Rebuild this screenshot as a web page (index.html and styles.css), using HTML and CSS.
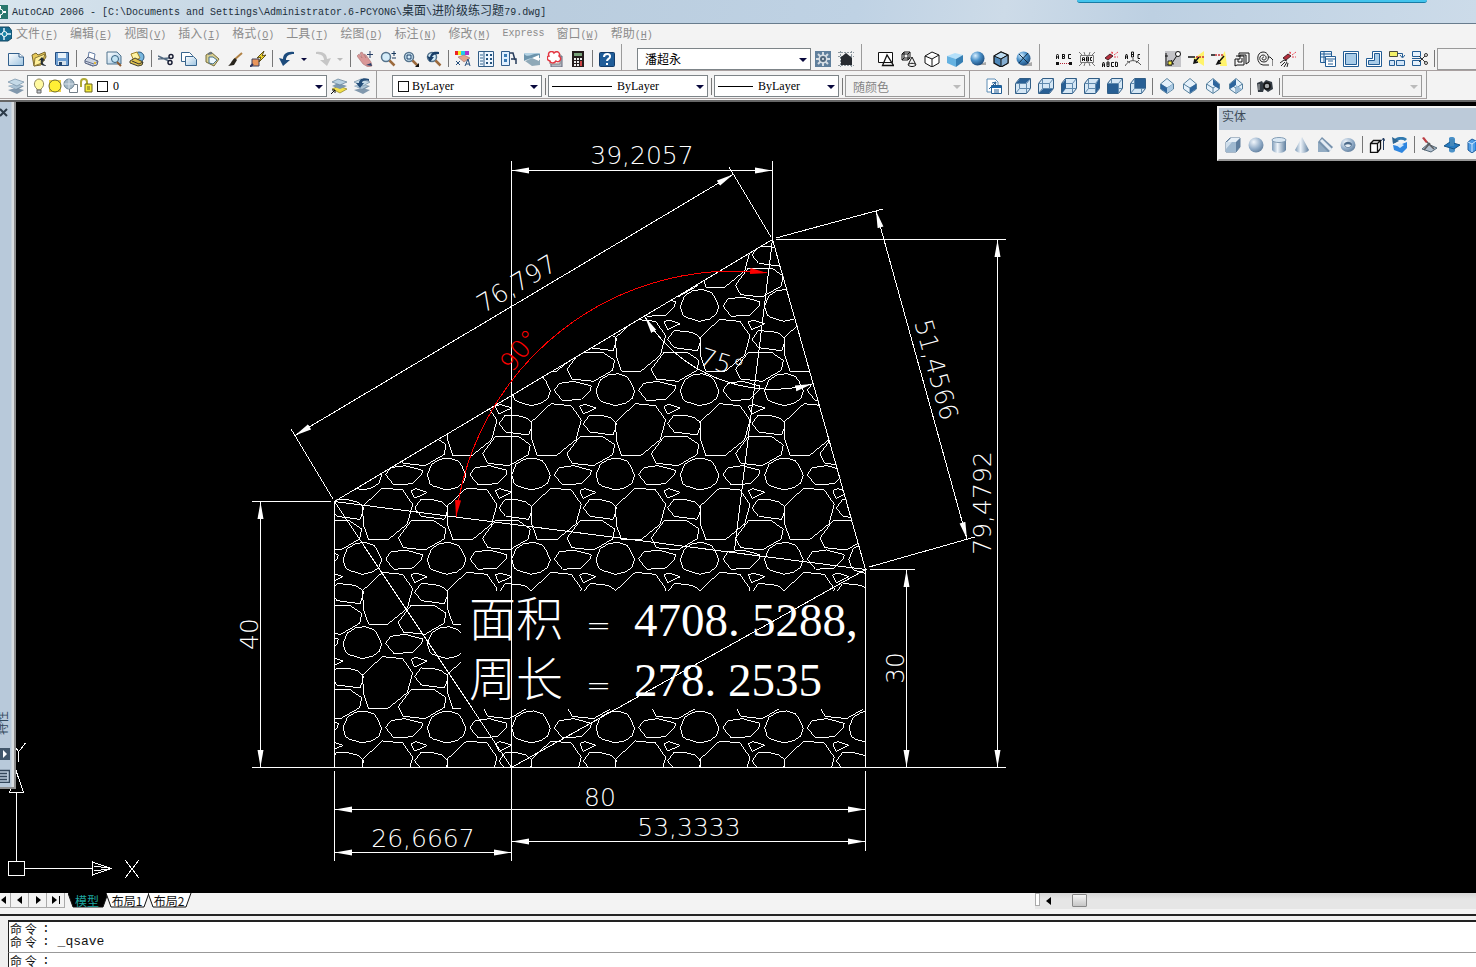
FILE: index.html
```html
<!DOCTYPE html>
<html lang="zh-CN">
<head>
<meta charset="utf-8">
<title>AutoCAD 2006</title>
<link rel="stylesheet" href="styles.css">
</head>
<body>
<svg class="sprite" aria-hidden="true">
  <defs>
    <linearGradient id="sheet" x1="0" y1="0" x2="1" y2="1"><stop offset="0" stop-color="#fff"/><stop offset="1" stop-color="#9cc3e0"/></linearGradient>
    <linearGradient id="steel" x1="0" y1="0" x2="1" y2="0"><stop offset="0" stop-color="#7d9bb8"/><stop offset=".4" stop-color="#eef4fa"/><stop offset="1" stop-color="#5f7f9f"/></linearGradient>
    <radialGradient id="ball" cx=".35" cy=".3" r=".8"><stop offset="0" stop-color="#d8efff"/><stop offset=".45" stop-color="#4a90c8"/><stop offset="1" stop-color="#153f6e"/></radialGradient>
    <radialGradient id="pearl" cx=".35" cy=".3" r=".8"><stop offset="0" stop-color="#f2f7fc"/><stop offset=".6" stop-color="#8faac6"/><stop offset="1" stop-color="#5b7896"/></radialGradient>
    <symbol id="new" viewBox="0 0 16 16"><path d="M.5 2.500H11L15.500 6V14.500H.5z" fill="url(#sheet)" stroke="#315f8c"/><path d="M11 2.500V6h4.500" fill="#fff" stroke="#315f8c"/></symbol>
    <symbol id="open" viewBox="0 0 16 16"><path d="M1 4L5 2l2 2 7-3 1 5-5 8-7 1z" fill="#e7c957" stroke="#77652c"/><path d="M4 7l10-4-3 9-8 3z" fill="#fff09a" stroke="#8b7836"/><path d="M15 15c-5 0-6-3-5-6l-3 1 4-4 3 4-2-.5c-1 2 0 4 3 5z" fill="#222c35"/></symbol>
    <symbol id="save" viewBox="0 0 16 16"><path d="M1.500 1.500h13v13h-12l-1-1z" fill="#6e9fd2" stroke="#234d80"/><path d="M4 2h8v5H4z" fill="#e9f3fa"/><path d="M4 10h8v4H4z" fill="#d7e2eb"/><path d="M5 11h3v3H5z" fill="#244469"/></symbol>
    <symbol id="print" viewBox="0 0 16 16"><path d="M5 7l1-6 6 2-1 6" fill="#fff" stroke="#667ea5"/><path d="M2 9l3-3 10 4-1 4-4 1-8-3z" fill="#ccd4e2" stroke="#4f5c7c"/><path d="M2 10l9 3 4-3M5 13l5 2" fill="none" stroke="#65708d"/><path d="M11 12h2" stroke="#e5bb3b" stroke-width="2"/></symbol>
    <symbol id="preview" viewBox="0 0 16 16"><path d="M1 1h10l4 4v8H1z" fill="url(#sheet)" stroke="#4e738d"/><circle cx="9" cy="8" r="3.500" fill="#c4e4f3" stroke="#356080"/><path d="M11 11l4 4" stroke="#8e5b30" stroke-width="2"/></symbol>
    <symbol id="publish" viewBox="0 0 16 16"><circle cx="10" cy="6" r="5" fill="#79b7df" stroke="#285880"/><path d="M2 3l6-2 3 6-6 3z" fill="#fff4a2" stroke="#a18127"/><path d="M1 10l5-3 8 4-1 3-4 1-8-3z" fill="#e0c24e" stroke="#42402e"/><path d="M3 10l7 3 4-2" fill="none" stroke="#333"/></symbol>
    <symbol id="cut" viewBox="0 0 16 16"><path d="M0 5l11 5M0 8l11-1" stroke="#526a81" stroke-width="1.500"/><circle cx="13" cy="5.500" r="2" fill="none" stroke="#1a1f35" stroke-width="1.500"/><circle cx="12" cy="11.500" r="2" fill="none" stroke="#1a1f35" stroke-width="1.500"/></symbol>
    <symbol id="copy" viewBox="0 0 16 16"><path d="M.5 1.500h8l3 3v6H.5z" fill="#fff" stroke="#38658d"/><path d="M4.500 5.500h8l3 3v6h-11z" fill="url(#sheet)" stroke="#38658d"/></symbol>
    <symbol id="paste" viewBox="0 0 16 16"><path d="M2 4l5-3 8 7-5 7-8-4z" fill="#d8cf91" stroke="#766c39"/><path d="M5 6h4l4 3-4 4-4-1z" fill="#edf8ff" stroke="#48718a"/><path d="M4 3l4-1" stroke="#69737f" stroke-width="2"/></symbol>
    <symbol id="brush" viewBox="0 0 16 16"><path d="M15 2L7 9" stroke="#b18245" stroke-width="2"/><path d="M8 7l2 2-3 5-6 1c3-2 3-5 7-8z" fill="#27241c"/></symbol>
    <symbol id="blockedit" viewBox="0 0 16 16"><path d="M2 8h7v7H2z" fill="#e9955a" stroke="#3f405c"/><path d="M0 16l3-3" stroke="#2d3460" stroke-width="2"/><path d="M14 0L7 7l4-1-2 5 7-7-4 1z" fill="#ffe52b" stroke="#5c4c18"/></symbol>
    <symbol id="undo" viewBox="0 0 16 16"><path d="M15 1C8 0 4 3 4 8L0 7l4 8 7-6H7C7 5 10 3 15 3z" fill="#1c4b7c"/></symbol>
    <symbol id="redo" viewBox="0 0 16 16"><path d="M1 1c7-1 11 2 11 7l4-1-4 8-7-6h4C9 5 6 3 1 3z" fill="#c6c6c6"/></symbol>
    <symbol id="pan" viewBox="0 0 16 16"><path d="M0 5l2-2 3 4-2-5 2-1 4 6-2-4 2 1 5 7 1 4-4 1-5-3z" fill="#d99797" stroke="#a06868" stroke-width=".5"/><path d="M9 14l6 1-1-3" fill="#27416b"/><path d="M13 0v7M10 3.500h6" stroke="#263e65"/></symbol>
    <symbol id="lens" viewBox="0 0 16 16"><circle cx="6" cy="6" r="4.500" fill="#d5edfa" stroke="#55738c" stroke-width="1.500"/><path d="M9.500 9.500l5 5" stroke="#9c6b3e" stroke-width="2.500"/></symbol>
    <symbol id="zoomrt" viewBox="0 0 16 16"><use href="#lens"/><path d="M14 0v5M11.500 2.500h5M12 7h4" stroke="#16365b"/></symbol>
    <symbol id="zoomwin" viewBox="0 0 16 16"><use href="#lens"/><path d="M4 4h4v4H4z" fill="none" stroke="#173b65"/><path d="M16 12v4h-4z" fill="#111"/></symbol>
    <symbol id="zoomprev" viewBox="0 0 16 16"><use href="#lens"/><path d="M13 1C7 0 5 2 4 6L1 5l3 6 4-5H6c1-2 3-3 7-3z" fill="#183e68"/></symbol>
    <symbol id="props" viewBox="0 0 16 16"><path d="M0 0h3v4H0z" fill="#e22"/><path d="M3 0h3v4H3z" fill="#ee2"/><path d="M6 0h4v4H6z" fill="#2ce"/><path d="M10 0h4v4h-4z" fill="#a3c"/><path d="M3 6l6-2 6 3-6 4z" fill="#e3a48b" stroke="#8b605e" stroke-width=".5"/><path d="M1 10l4 4M1 14l4-4M10 15l3-7 2 7M11 13h3" stroke="#254e7c" fill="none"/></symbol>
    <symbol id="center" viewBox="0 0 16 16"><path d="M.5.5h15v15H.5zM6 1v14" fill="#edf6ff" stroke="#315c86"/><path d="M2 4h3M2 7h3M2 10h3M2 13h3" stroke="#37678e"/><path d="M8 3h2v2H8zM12 3h2v2h-2zM8 7h2v2H8zM12 7h2v2h-2zM8 11h2v2H8zM12 11h2v2h-2z" fill="#24527c"/></symbol>
    <symbol id="palette" viewBox="0 0 16 16"><path d="M.5.500h8v14h-8z" fill="#dfefff" stroke="#315d8d"/><path d="M3 3h3v3H3zM3 8h3v3H3z" fill="#397bb6"/><path d="M9 2h3l2 7M10 8h5v5" fill="none" stroke="#263b5a" stroke-width="1.500"/></symbol>
    <symbol id="sheetset" viewBox="0 0 16 16"><path d="M0 2h16v4l-6 3H0z" fill="#b5d3e4"/><path d="M0 3c5 5 8-2 16 0v4C10 8 6 6 0 10z" fill="#6c94ac"/><path d="M1 10l8-3 7 2v5l-8 1z" fill="#8fa9b8"/><path d="M8 7l7-3v6z" fill="#fff"/></symbol>
    <symbol id="markup" viewBox="0 0 16 16"><path d="M4 5h11v11H4z" fill="#b4b9c2" stroke="#64687c"/><path d="M3 3h10v10H3z" fill="#eee" stroke="#888"/><path d="M3 10C-1 9 0 5 2 5 0 1 5-1 7 2c3-3 7 0 5 3 4 3 0 7-3 5-2 3-6 2-6 0z" fill="#fff" stroke="#e33742" stroke-width="1.500"/></symbol>
    <symbol id="calc" viewBox="0 0 16 16"><path d="M2 0h12v16H2z" fill="#241c1c"/><path d="M4 2h8v3H4z" fill="#78a078"/><path d="M4 7h2v2H4zM7 7h2v2H7zM10 7h2v2h-2zM4 10h2v2H4zM7 10h2v2H7zM4 13h2v2H4zM7 13h2v2H7z" fill="#eee"/><path d="M10 10h2v5h-2z" fill="#c44"/></symbol>
    <symbol id="help" viewBox="0 0 16 16"><rect x=".5" y="1.500" width="15" height="14" rx="1" fill="#1f5c98" stroke="#123b69"/><path d="M5 6c0-4 7-4 6 0-.5 2-3 2-3 4" fill="none" stroke="#fff" stroke-width="2"/><path d="M7 12h2v2H7z" fill="#fff"/></symbol>
    <symbol id="gear" viewBox="0 0 16 16"><path d="M0 0h16v16H0z" fill="#5f7f9c"/><path d="M8 1v14M1 8h14M3 3l10 10M13 3L3 13" stroke="#d5dde4" stroke-width="2"/><circle cx="8" cy="8" r="4.500" fill="#d5dde4"/><circle cx="8" cy="8" r="3" fill="#51687d"/><circle cx="8" cy="8" r="1" fill="#e9eef2"/></symbol>
    <symbol id="home" viewBox="0 0 16 16"><path d="M0 1.500h16M0 5.500h16M2.500 0v16M13.500 0v16M0 14.500h16" stroke="#8e99a0" stroke-dasharray="2 1"/><path d="M2 7l6-5 6 5v7H3V7z" fill="#272b30"/></symbol>
    <symbol id="wire2d" viewBox="0 0 16 16"><path d="M.5 1.500h14v10H.5z" fill="#fff" stroke="#111"/><path d="M9 4L4.500 14.500h11z" fill="none" stroke="#111" stroke-width="1.300"/></symbol>
    <symbol id="wire3d" viewBox="0 0 16 16"><path d="M1 3h6v6H1zM3 1h6v6H3zM1 3l2-2M7 3l2-2M7 9l2-2M1 9l2-2M11 6L7 14c2 2 6 2 8 0zM8 13c2-1 4-1 6 0" fill="none" stroke="#111"/></symbol>
    <symbol id="hidden" viewBox="0 0 16 16"><path d="M1 5l7-4 7 3v8l-7 4-7-4zM1 5l7 3 7-4M8 8v8" fill="#fff" stroke="#111"/></symbol>
    <symbol id="flat" viewBox="0 0 16 16"><path d="M0 5l8-3 8 2-7 4z" fill="#b4e0fa"/><path d="M0 5l9 3v8l-9-4z" fill="#65b2e1"/><path d="M16 4L9 8v8l7-5z" fill="#367fb4"/></symbol>
    <symbol id="sphere" viewBox="0 0 16 16"><path d="M5 14h11v-3z" fill="#aaa"/><circle cx="7.500" cy="7.500" r="7" fill="url(#ball)"/></symbol>
    <symbol id="flatedge" viewBox="0 0 16 16"><path d="M1 5l7-4 7 3v8l-7 4-7-4z" fill="#4f88b9" stroke="#111" stroke-width="1.300"/><path d="M1 5l7-4 7 3-7 4z" fill="#bddcf1" stroke="#111"/><path d="M8 8l7-4v8l-7 4z" fill="#85add0" stroke="#111"/></symbol>
    <symbol id="gouraud" viewBox="0 0 16 16"><path d="M5 15h11v-4z" fill="#aaa"/><circle cx="7.500" cy="7.500" r="7" fill="url(#ball)"/><path d="M3 3l9 9M3 12l9-10" stroke="#122b40"/></symbol>
    <symbol id="abc" viewBox="0 0 16 16"><g fill="none" stroke="#111"><path d="M.5 8V4.500l1-1.500 1 1.500V8M.5 6h2M6.500 3v5M6.500 3.500h2v2h-2m2 0v2h-2M15 3.500h-2.500v4H15"/></g></symbol>
    <symbol id="text1" viewBox="0 0 16 16"><use href="#abc"/><path d="M0 12.500h16" stroke="#b32435" stroke-dasharray="1 1"/><path d="M0 11h3v3H0zM13 11h3v3h-3z" fill="#111"/></symbol>
    <symbol id="text2" viewBox="0 0 16 16"><path d="M1.500 4.500h13v7h-13zM0 1l3 3M16 1l-3 3M0 15l3-3M16 15l-3-3M5 1l1 3M11 1l-1 3M5 15l1-3M11 15l-1-3" fill="none" stroke="#777"/><path d="M3.500 10V7l1-1 1 1v3M3.500 8.500h2M7.500 6v4h2V6zM7 8h2M13 6.500h-1.500v3H13" fill="none" stroke="#111"/></symbol>
    <symbol id="spray" viewBox="0 0 16 16"><path d="M3 7l5-4 3 2-5 4z" fill="#b52d3a" stroke="#4c2028"/><path d="M10 3l1-3M12 4l4-3M12 6h4M9 1l2 1" stroke="#ea4754" stroke-dasharray="2 1"/></symbol>
    <symbol id="text3" viewBox="0 0 16 16"><use href="#spray"/><path d="M.5 16v-3l1-2 1 2v3M.5 14h2M5 11v4.500h2V11zM5 13h2M12 11.500H9.500v4H12M13.500 11v4.500h2v-4z" fill="none" stroke="#111"/></symbol>
    <symbol id="text4" viewBox="0 0 16 16"><path d="M.5 8V5l1-2 1 2v3M.5 6h2M6.500 1h2v5h-2zM6 3.500h3M15 3.500h-2v4h2" fill="none" stroke="#111"/><path d="M0 15c4-7 11-7 16-1M2 10l3 2M14 9l-3 3M8 7v3" fill="none" stroke="#555"/></symbol>
    <symbol id="edit1" viewBox="0 0 16 16"><path d="M0 0h16v16H0z" fill="#c4c4c8"/><path d="M1 2v11M0 5h3M0 14h7M13 3L7 12M7 9l-2 3 4 1" fill="none" stroke="#111"/><circle cx="13" cy="3" r="2.500" fill="#fff" stroke="#111"/><path d="M3 10h4v4H3z" fill="#f4e941" stroke="#222"/></symbol>
    <symbol id="trim" viewBox="0 0 16 16"><path d="M5 8l11-8v15z" fill="#fff36a"/><path d="M0 6h7M6 12l5-6M7 8l-1 4 4-1" fill="none" stroke="#111" stroke-width="1.500"/><path d="M8 6h8" stroke="#c43135" stroke-width="1.500" stroke-dasharray="2 1"/></symbol>
    <symbol id="extend" viewBox="0 0 16 16"><path d="M9 8l5-8 2 15H9z" fill="#fff36a"/><path d="M0 4h4M7 12l6-7M8 9l-2 4 4-1" fill="none" stroke="#111" stroke-width="1.500"/><path d="M4 4h9" stroke="#c43135" stroke-width="1.500" stroke-dasharray="2 1"/></symbol>
    <symbol id="offset1" viewBox="0 0 16 16"><path d="M2 5h8v9H3l-2 1V8h5V4h6v9M5 6V2h10v9l-3 2M4 8v3h4V7" fill="none" stroke="#111"/></symbol>
    <symbol id="offset2" viewBox="0 0 16 16"><path d="M12 14H6C-1 13-1 1 6 1s7 10 1 10-5-7-1-7 4 5 1 5-2-3 0-3M11 6h2l3 3v6" fill="none" stroke="#222"/></symbol>
    <symbol id="explode" viewBox="0 0 16 16"><use href="#spray"/><path d="M0 12l4-3 3 1M1 15l4-4M4 16l3-5M7 16l1-4" fill="none" stroke="#222"/></symbol>
    <symbol id="vp1" viewBox="0 0 16 16"><path d="M.5.500h11v11H.5zM0 3h12M0 6h12M4 0v12" fill="#ebf4fd" stroke="#225c94"/><path d="M5.500 5.500h10v10h-10zM5 8h10M8 10h5M8 13h5" fill="#fff" stroke="#225c94"/></symbol>
    <symbol id="vp2" viewBox="0 0 16 16"><path d="M.5.500h15v15H.5z" fill="#fff" stroke="#225c94"/><path d="M2.500 2.500h11v11h-11z" fill="#a9cce8" stroke="#225c94"/></symbol>
    <symbol id="vp3" viewBox="0 0 16 16"><path d="M6.500.500h9v15H.5v-8h6z" fill="#fff" stroke="#225c94"/><path d="M8.500 2.500h5v11h-11v-4h6z" fill="#a9cce8" stroke="#225c94"/></symbol>
    <symbol id="vp4" viewBox="0 0 16 16"><path d="M.5.500h8v5h-8z" fill="#f3f169" stroke="#4b4b3c"/><path d="M9 2.500h4.500V6M11 4l2.500 3L16 4" fill="none" stroke="#225c94"/><path d="M.5 9.500h5v5h-5zM7.500 9.500h8v5h-8z" fill="#d1e5f8" stroke="#225c94"/></symbol>
    <symbol id="vp5" viewBox="0 0 16 16"><path d="M.5.500h8v5h-8zM.5 9.500h8v5h-8zM0 7.500h9" fill="#e5f1fc" stroke="#225c94"/><path d="M7 11l6-6M7 5l6 6" stroke="#333"/><circle cx="14" cy="4" r="1.500" fill="none" stroke="#333"/><circle cx="14" cy="12" r="1.500" fill="none" stroke="#333"/></symbol>
    <symbol id="layers" viewBox="0 0 16 16"><path d="M0 12l8-2 8 2-7 4z" fill="#8198ad"/><path d="M0 8l8-2 8 2-7 4z" fill="#7890a6"/><path d="M0 8l8-2 6 2-6 3z" fill="#abc3d5"/><path d="M0 4l7-3 9 3-7 4z" fill="#c5dae8" stroke="#718da4" stroke-width=".7"/></symbol>
    <symbol id="layercur" viewBox="0 0 16 16"><path d="M1 11l7-3 8 3-7 4z" fill="#f1df49" stroke="#8c8020" stroke-width=".7"/><path d="M1 8l6-3 9 3-7 3z" fill="#7c98ae"/><path d="M1 4l6-3 9 3-7 3z" fill="#b8d1e1" stroke="#607d94" stroke-width=".7"/><path d="M0 16l4-4M1 12h3v3" stroke="#111" fill="none"/></symbol>
    <symbol id="layerprev" viewBox="0 0 16 16"><use href="#layers"/><path d="M15 1C8-1 5 2 5 5L2 5l4 5 4-5H8c0-2 2-3 7-2z" fill="#244d78"/></symbol>
    <symbol id="bulb" viewBox="0 0 16 16"><path d="M6 11C1 7 4 1 8 1s7 6 2 10v1H6z" fill="#fff9a0" stroke="#8d865a"/><path d="M6 12h4v3H6z" fill="#c4cad0" stroke="#666"/></symbol>
    <symbol id="sun" viewBox="0 0 16 16"><path d="M2 2h12v12H2z" fill="#f0d44d"/><circle cx="8" cy="8" r="6" fill="#ffef35" stroke="#6d6930"/></symbol>
    <symbol id="freeze" viewBox="0 0 16 16"><path d="M6.500 6.500h8v8h-8z" fill="#fff" stroke="#747f89"/><circle cx="6" cy="6" r="5" fill="#a5b8c6" stroke="#6a8394"/><path d="M6 1v10M1 6h10" stroke="#d6e0e8"/></symbol>
    <symbol id="lock" viewBox="0 0 16 16"><path d="M2 9V4c0-4 6-4 6 0v4" fill="none" stroke="#b0a935" stroke-width="2"/><path d="M6 6h7v8H6z" fill="#f5ec39" stroke="#6b6520"/><path d="M8 9h3M8 11h3" stroke="#6b6520"/></symbol>
    <symbol id="views" viewBox="0 0 16 16"><path d="M1 1h8l3 3v10H1z" fill="#fff" stroke="#5d8db6"/><path d="M5.500 7.500h10v8h-10z" fill="#fff" stroke="#245e93"/><path d="M5 8h10v2H5z" fill="#1966a8"/><path d="M8 12h5M8 14h5M3 11l7-7M6 5l4-1-1 4" fill="none" stroke="#245e93"/></symbol>
    <symbol id="cubebox" viewBox="0 0 16 16"><path d="M.5 5.500l4-5h11v10l-4 5H.5z" fill="#d5e7f5" stroke="#315d85"/><path d="M.5 5.500h11v10M11.500 5.500l4-5M4.500 1v9.500h11M4.500 10.500l-4 5" fill="none" stroke="#5f89ad"/></symbol>
    <symbol id="c1" viewBox="0 0 16 16"><use href="#cubebox"/><path d="M1 5l4-4h10l-4 4z" fill="#285f94"/></symbol>
    <symbol id="c2" viewBox="0 0 16 16"><use href="#cubebox"/><path d="M1 15l4-4h10l-4 4z" fill="#285f94"/></symbol>
    <symbol id="c3" viewBox="0 0 16 16"><use href="#cubebox"/><path d="M1 15V6l4-5v9z" fill="#285f94"/></symbol>
    <symbol id="c4" viewBox="0 0 16 16"><use href="#cubebox"/><path d="M12 15V6l3-5v9z" fill="#285f94"/></symbol>
    <symbol id="c5" viewBox="0 0 16 16"><use href="#cubebox"/><path d="M1 6h10v9H1z" fill="#285f94"/></symbol>
    <symbol id="c6" viewBox="0 0 16 16"><use href="#cubebox"/><path d="M5 1h10v9H5z" fill="#285f94"/></symbol>
    <symbol id="isobox" viewBox="0 0 16 16"><path d="M1.500 6L8 .5 14.500 6v5L8 15.500 1.500 11z" fill="#e5f1fb" stroke="#56809e"/><path d="M1.500 6L8 10l6.500-4M8 10v5" fill="none" stroke="#56809e"/></symbol>
    <symbol id="i1" viewBox="0 0 16 16"><use href="#isobox"/><path d="M2 6l6 4v5l-6-4z" fill="#2d659d"/><path d="M8 10l6-4v5l-6 4z" fill="#a9c9e3"/></symbol>
    <symbol id="i2" viewBox="0 0 16 16"><use href="#isobox"/><path d="M8 10l6-4v5l-6 4z" fill="#2d659d"/></symbol>
    <symbol id="i3" viewBox="0 0 16 16"><use href="#isobox"/><path d="M8 1l6 5v5L8 7z" fill="#2d659d"/></symbol>
    <symbol id="i4" viewBox="0 0 16 16"><use href="#isobox"/><path d="M8 1v6l-6 4V6z" fill="#2d659d"/><path d="M8 7l6 4-6 4z" fill="#9bbbd7"/></symbol>
    <symbol id="camera" viewBox="0 0 16 16"><path d="M0 5l5-2 1 2 3-3 6 2 1 7-5 3-4-3-1 3H1z" fill="#333b43"/><circle cx="10" cy="8" r="3" fill="#a5a9ac" stroke="#111" stroke-width="1.500"/><path d="M2 6v6" stroke="#bbb"/></symbol>
    <symbol id="sbox" viewBox="0 0 16 16"><path d="M1 5l4-4h10v9l-4 5H1z" fill="#5f7f9f" stroke="#617f9c"/><path d="M1 5h10v10H1z" fill="#9fb9d0"/><path d="M1 5h6L1 12z" fill="#cfdeeb"/><path d="M2 5l4-4h9l-4 4z" fill="#e7f0f8"/></symbol>
    <symbol id="sball" viewBox="0 0 16 16"><circle cx="8" cy="8" r="7.500" fill="url(#pearl)"/></symbol>
    <symbol id="scyl" viewBox="0 0 16 16"><path d="M1 3v10c2 4 12 4 14 0V3z" fill="url(#steel)"/><ellipse cx="8" cy="3" rx="7" ry="2.500" fill="#d9e7f3" stroke="#839db5"/></symbol>
    <symbol id="scone" viewBox="0 0 16 16"><path d="M8 0L1 13c2 4 12 4 14 0z" fill="url(#steel)"/></symbol>
    <symbol id="swedge" viewBox="0 0 16 16"><path d="M1 5l4-5 11 10-4 5H1z" fill="#7792ad"/><path d="M1 5l10 10H1z" fill="#92abc2"/><path d="M4 3l10 10" stroke="#e4ecf4" stroke-width="3"/></symbol>
    <symbol id="storus" viewBox="0 0 16 16"><ellipse cx="8" cy="8" rx="7.500" ry="7" fill="url(#pearl)"/><path d="M4 7c2-3 6-3 8 0-1 5-7 5-8 0z" fill="#4d6b8a"/><path d="M5 8c2-1 4-1 6 0-1 3-5 3-6 0z" fill="#e7eff6"/></symbol>
    <symbol id="extrude" viewBox="0 0 16 16"><path d="M1.500 6.500l3-3h7v8l-3 4h-7zM1.500 6.500h7v9M8.500 6.500l3-3" fill="#fff" stroke="#111" stroke-width="1.300"/><path d="M14.500 13V1M12 4l2.500-3L16 4" fill="none" stroke="#243d60"/></symbol>
    <symbol id="revolve" viewBox="0 0 16 16"><path d="M2 5c3-5 10-4 12-2" fill="none" stroke="#317ab0" stroke-width="3"/><path d="M1 8l5 1 4-2 5-2v6l-5 5-8-3z" fill="#2e86e0"/><path d="M4 8l4-2 4 2-4 3z" fill="#d6e9fa"/><path d="M0 0l1 7 6-3z" fill="#2e6591"/></symbol>
    <symbol id="slice" viewBox="0 0 16 16"><path d="M1 12l6-5 9 4-6 4z" fill="#b0bfce" stroke="#526777"/><path d="M1 1l2-1 4 5-2 1z" fill="#bc3e44"/><path d="M6 5l7 7M9 6L3 13" stroke="#595b5e" stroke-width="1.500"/></symbol>
    <symbol id="section" viewBox="0 0 16 16"><path d="M5 1c2-2 6-1 6 1v12c-2 3-6 1-6 0z" fill="#4a91c8"/><path d="M0 9l6-4 10 3-6 4z" fill="#277bc1" stroke="#175486"/><path d="M6 2h4v7H6z" fill="#4689bb"/></symbol>
    <symbol id="interfere" viewBox="0 0 16 16"><path d="M1 5l4-3 4 2v9l-4 3-4-3z" fill="#4e9ce4" stroke="#1f5d9d"/><path d="M8 3h8v10H8z" fill="#2280db"/><path d="M1 5l4 2 4-3M5 7v8" fill="none" stroke="#d0e8ff"/></symbol>
    <symbol id="logo" viewBox="0 0 16 16"><path d="M0 1h16v14H0z" fill="#29776e"/><path d="M8 2v12M2 8h12" stroke="#fff" stroke-width="2"/><circle cx="8" cy="8" r="3" fill="#29776e" stroke="#fff"/></symbol>
    <symbol id="doc" viewBox="0 0 16 16"><path d="M0 1h13l3 4v7l-4 3H0z" fill="#176c91" stroke="#124762"/><path d="M8 2v12M3 8h12" stroke="#dff4ff" stroke-width="1.500"/><circle cx="8.500" cy="8" r="2.500" fill="#1b88aa" stroke="#fff"/></symbol>
  </defs>
</svg>

<header class="titlebar">
  <svg class="app-logo" aria-hidden="true"><use href="#logo"/></svg>
  <h1 class="title">AutoCAD 2006 - [C:\Documents and Settings\Administrator.6-PCYONG\<span class="zh">桌面</span>\<span class="zh">进阶级练习题</span>79.dwg]</h1>
  <div class="dock"></div>
</header>

<nav class="menubar" aria-label="菜单">
  <svg class="app-logo" aria-hidden="true"><use href="#doc"/></svg>
  <button><span class="zh">文件</span>(<u>F</u>)</button>
  <button><span class="zh">编辑</span>(<u>E</u>)</button>
  <button><span class="zh">视图</span>(<u>V</u>)</button>
  <button><span class="zh">插入</span>(<u>I</u>)</button>
  <button><span class="zh">格式</span>(<u>O</u>)</button>
  <button><span class="zh">工具</span>(<u>T</u>)</button>
  <button><span class="zh">绘图</span>(<u>D</u>)</button>
  <button><span class="zh">标注</span>(<u>N</u>)</button>
  <button><span class="zh">修改</span>(<u>M</u>)</button>
  <button>Express</button>
  <button><span class="zh">窗口</span>(<u>W</u>)</button>
  <button><span class="zh">帮助</span>(<u>H</u>)</button>
</nav>

<div class="toolrow">
  <div class="toolbar first">
    <button class="ic" aria-label="新建"><svg><use href="#new"/></svg></button>
    <button class="ic" aria-label="打开"><svg><use href="#open"/></svg></button>
    <button class="ic" aria-label="保存"><svg><use href="#save"/></svg></button>
    <i class="sep"></i>
    <button class="ic" aria-label="打印"><svg><use href="#print"/></svg></button>
    <button class="ic" aria-label="打印预览"><svg><use href="#preview"/></svg></button>
    <button class="ic" aria-label="发布"><svg><use href="#publish"/></svg></button>
    <i class="sep"></i>
    <button class="ic" aria-label="剪切"><svg><use href="#cut"/></svg></button>
    <button class="ic" aria-label="复制"><svg><use href="#copy"/></svg></button>
    <button class="ic" aria-label="粘贴"><svg><use href="#paste"/></svg></button>
    <button class="ic" aria-label="特性匹配"><svg><use href="#brush"/></svg></button>
    <button class="ic" aria-label="块编辑器"><svg><use href="#blockedit"/></svg></button>
    <i class="sep"></i>
    <button class="ic" aria-label="放弃"><svg><use href="#undo"/></svg></button>
    <button class="drop" aria-label="放弃列表"></button>
    <button class="ic" aria-label="重做"><svg><use href="#redo"/></svg></button>
    <button class="drop off" aria-label="重做列表"></button>
    <i class="sep"></i>
    <button class="ic" aria-label="平移"><svg><use href="#pan"/></svg></button>
    <button class="ic" aria-label="实时缩放"><svg><use href="#zoomrt"/></svg></button>
    <button class="ic" aria-label="窗口缩放"><svg><use href="#zoomwin"/></svg></button>
    <button class="ic" aria-label="缩放上一个"><svg><use href="#zoomprev"/></svg></button>
    <i class="sep"></i>
    <button class="ic" aria-label="特性"><svg><use href="#props"/></svg></button>
    <button class="ic" aria-label="设计中心"><svg><use href="#center"/></svg></button>
    <button class="ic" aria-label="工具选项板"><svg><use href="#palette"/></svg></button>
    <button class="ic" aria-label="图纸集"><svg><use href="#sheetset"/></svg></button>
    <button class="ic" aria-label="标记集"><svg><use href="#markup"/></svg></button>
    <button class="ic" aria-label="计算器"><svg><use href="#calc"/></svg></button>
    <i class="sep"></i>
    <button class="ic" aria-label="帮助"><svg><use href="#help"/></svg></button>
  </div>
  <div class="toolbar wide">
    <div class="combo w174"><select class="zh" aria-label="工作空间"><option>潘超永</option></select></div>
    <button class="ic" aria-label="工作空间设置"><svg><use href="#gear"/></svg></button>
    <button class="ic" aria-label="我的工作空间"><svg><use href="#home"/></svg></button>
  </div>
  <div class="toolbar">
    <button class="ic" aria-label="二维线框"><svg><use href="#wire2d"/></svg></button>
    <button class="ic" aria-label="三维线框"><svg><use href="#wire3d"/></svg></button>
    <button class="ic" aria-label="消隐"><svg><use href="#hidden"/></svg></button>
    <button class="ic" aria-label="平面着色"><svg><use href="#flat"/></svg></button>
    <button class="ic" aria-label="体着色"><svg><use href="#sphere"/></svg></button>
    <button class="ic" aria-label="带边框平面着色"><svg><use href="#flatedge"/></svg></button>
    <button class="ic" aria-label="带边框体着色"><svg><use href="#gouraud"/></svg></button>
  </div>
  <div class="toolbar">
    <button class="ic" aria-label="对齐文字"><svg><use href="#text1"/></svg></button>
    <button class="ic" aria-label="文字遮罩"><svg><use href="#text2"/></svg></button>
    <button class="ic" aria-label="分解文字"><svg><use href="#text3"/></svg></button>
    <button class="ic" aria-label="弧形文字"><svg><use href="#text4"/></svg></button>
  </div>
  <div class="toolbar">
    <button class="ic" aria-label="移动复制旋转"><svg><use href="#edit1"/></svg></button>
    <button class="ic" aria-label="扩展修剪"><svg><use href="#trim"/></svg></button>
    <button class="ic" aria-label="扩展延伸"><svg><use href="#extend"/></svg></button>
    <button class="ic" aria-label="多段线偏移"><svg><use href="#offset1"/></svg></button>
    <button class="ic" aria-label="修订云线"><svg><use href="#offset2"/></svg></button>
    <button class="ic" aria-label="分解属性"><svg><use href="#explode"/></svg></button>
  </div>
  <div class="toolbar last">
    <button class="ic" aria-label="视口对话框"><svg><use href="#vp1"/></svg></button>
    <button class="ic" aria-label="单个视口"><svg><use href="#vp2"/></svg></button>
    <button class="ic" aria-label="多边形视口"><svg><use href="#vp3"/></svg></button>
    <button class="ic" aria-label="对象转换为视口"><svg><use href="#vp4"/></svg></button>
    <button class="ic" aria-label="剪裁视口"><svg><use href="#vp5"/></svg></button>
    <i class="sep"></i>
    <div class="combo off grow noarrow"><select aria-label="视口比例"><option></option></select></div>
  </div>
</div>

<div class="toolrow second">
  <div class="toolbar first">
    <button class="ic" aria-label="图层特性"><svg><use href="#layers"/></svg></button>
    <div class="combo w300">
      <select class="layer" aria-label="图层"><option>0</option></select>
      <span class="marks"><svg><use href="#bulb"/></svg><svg><use href="#sun"/></svg><svg><use href="#freeze"/></svg><svg><use href="#lock"/></svg><i class="swatch"></i></span>
    </div>
    <button class="ic" aria-label="置为当前图层"><svg><use href="#layercur"/></svg></button>
    <button class="ic" aria-label="上一个图层"><svg><use href="#layerprev"/></svg></button>
  </div>
  <div class="toolbar wide">
    <div class="combo w150"><select class="color" aria-label="颜色"><option>ByLayer</option></select><span class="marks"><i class="swatch"></i></span></div>
    <i class="sep"></i>
    <div class="combo w160"><select class="ltype" aria-label="线型"><option>ByLayer</option></select><span class="marks"><i class="line long"></i></span></div>
    <i class="sep"></i>
    <div class="combo w125"><select class="lweight" aria-label="线宽"><option>ByLayer</option></select><span class="marks"><i class="line"></i></span></div>
    <i class="sep"></i>
    <div class="combo off w120"><select class="zh" aria-label="打印样式" disabled><option>随颜色</option></select></div>
  </div>
  <div class="toolbar">
    <button class="ic" aria-label="命名视图"><svg><use href="#views"/></svg></button>
    <i class="sep"></i>
    <button class="ic" aria-label="俯视"><svg><use href="#c1"/></svg></button>
    <button class="ic" aria-label="仰视"><svg><use href="#c2"/></svg></button>
    <button class="ic" aria-label="左视"><svg><use href="#c3"/></svg></button>
    <button class="ic" aria-label="右视"><svg><use href="#c4"/></svg></button>
    <button class="ic" aria-label="主视"><svg><use href="#c5"/></svg></button>
    <button class="ic" aria-label="后视"><svg><use href="#c6"/></svg></button>
    <i class="sep"></i>
    <button class="ic" aria-label="西南等轴测"><svg><use href="#i1"/></svg></button>
    <button class="ic" aria-label="东南等轴测"><svg><use href="#i2"/></svg></button>
    <button class="ic" aria-label="东北等轴测"><svg><use href="#i3"/></svg></button>
    <button class="ic" aria-label="西北等轴测"><svg><use href="#i4"/></svg></button>
    <i class="sep"></i>
    <button class="ic" aria-label="相机"><svg><use href="#camera"/></svg></button>
    <i class="sep"></i>
    <div class="combo off w140"><select aria-label="视图列表" disabled><option></option></select></div>
  </div>
</div>

<main class="canvas">
  <svg class="drawing" viewBox="0 102 1476 791" preserveAspectRatio="xMinYMin meet" role="img" aria-label="图形">
    <defs>
      <marker id="arrow" markerUnits="userSpaceOnUse" markerWidth="18" markerHeight="8" refX="17" refY="4" orient="auto-start-reverse"><path d="M17 4L0 1V7z" fill="#fff" stroke="none"/></marker>
      <marker id="arrowred" markerUnits="userSpaceOnUse" markerWidth="18" markerHeight="8" refX="17" refY="4" orient="auto-start-reverse"><path d="M17 4L0 1V7z" fill="#f00" stroke="none"/></marker>
      <clipPath id="area"><path d="M334 768V501L773 239L866 569V591H461V709H866V768z"/></clipPath>
      <g id="stones" stroke-width="3">
        <path d="M106 191L135 187L162 196L172 210L185 239L177 262L157 276L127 283L87 271L77 264L69 238L82 206z"/>
        <path d="M197 237L212 216L255 210L308 224L305 237L278 264L222 268L207 250z"/>
        <path d="M273 285L288 279L322 290L284 308z"/>
        <path d="M187 277L248 283L278 326L262 385L203 433L146 433L130 387L128 332z"/>
        <path d="M284 337L303 311L341 313L365 319L383 334L381 350L373 371L304 362z"/>
        <path d="M235 427L273 376L343 376L378 400L372 430L315 463L250 456z"/>
      </g>
      <g id="band">
        <use href="#stones" x="-253"/><use href="#stones"/><use href="#stones" x="253"/><use href="#stones" x="506"/><use href="#stones" x="759"/><use href="#stones" x="1012"/><use href="#stones" x="1265"/><use href="#stones" x="1518"/>
      </g>
    </defs>
    <g clip-path="url(#area)">
      <g class="ink" transform="translate(320 480) scale(.3333)">
        <use href="#band" y="-1012"/><use href="#band" y="-759"/><use href="#band" y="-506"/><use href="#band" y="-253"/><use href="#band"/><use href="#band" y="253"/><use href="#band" y="506"/>
      </g>
    </g>
    <g class="ink">
      <path d="M334.500 767.500V501.500L772.500 239.500L865.500 569.500V767.500"/>
      <path d="M252 767.500H1006M511.500 161V861M772.500 161V239M334.500 771V861M865.500 771V851"/>
      <path d="M334.500 501.500L865.500 569.500L511.500 767.500zM772.500 239.500L734.500 550"/>
      <path d="M252 501.500H331M776 239.500H1006M870 569.500H915"/>
      <path d="M333 499L291 429M771 237L729 167M776 238L883 209M869 567L975 537"/>
    </g>
    <g class="ink dim">
      <path d="M512 170.500H772"/>
      <path d="M295 435.500L733 174.500"/>
      <path d="M876 211L967 539"/>
      <path d="M997.500 240V767"/>
      <path d="M906.500 570V767"/>
      <path d="M260.500 502V767"/>
      <path d="M335 809.500H865"/>
      <path d="M512 841.500H865"/>
      <path d="M335 852.500H511"/>
      <path d="M645 317A150 150 0 0 0 812 384"/>
    </g>
    <path class="ink reddim" d="M456 517A280 280 0 0 1 767 273"/>
    <g class="dimtext">
      <text x="642" y="164">39,2057</text>
      <text x="600" y="806">80</text>
      <text x="689" y="836">53,3333</text>
      <text x="423" y="847">26,6667</text>
      <text transform="translate(521 291) rotate(-30.800)">76,797</text>
      <text transform="translate(928 372) rotate(74.500)">51,4566</text>
      <text transform="translate(991 503) rotate(-90)">79,4792</text>
      <text transform="translate(904 668) rotate(-90)">30</text>
      <text transform="translate(258 634) rotate(-90)">40</text>
      <text transform="translate(719 371) rotate(18)">75°</text>
      <text class="red" transform="translate(526 356) rotate(-50)">90°</text>
    </g>
    <g class="result">
      <text y="636"><tspan class="han" x="469">面积</tspan><tspan class="eq" x="586">=</tspan><tspan x="634">4708.</tspan><tspan x="752">5288,</tspan></text>
      <text y="696"><tspan class="han" x="469">周长</tspan><tspan class="eq" x="586">=</tspan><tspan x="634">278.</tspan><tspan x="728">2535</tspan></text>
    </g>
    <g class="ink">
      <path d="M8.500 861.500H24.500V875.500H8.500zM24 868.500H92M92.500 862L111 868.500L92.500 875zM94 866L111 868.500L94 871M16.500 861V792M9.500 792.500H23.500L16.500 772z"/>
      <path d="M125 860L139 878M139 860L125 878M13 743L18.500 752V762M18.500 752L25.500 743"/>
    </g>
  </svg>

  <aside class="palette">
    <button class="mini" aria-label="关闭"><svg viewBox="0 0 10 10"><path d="M0 1l7 7M7 1L0 8" stroke="#2b3a48" stroke-width="2"/></svg></button>
    <span class="side">特性</span>
    <button class="mini" aria-label="自动隐藏"><svg viewBox="0 0 10 14"><path d="M0 1h10v12H0z" fill="#42566a"/><path d="M3 3l4 4-4 4z" fill="#fff"/></svg></button>
    <button class="mini" aria-label="特性菜单"><svg viewBox="0 0 10 14"><path d="M0 1.500h9.500v12H0M0 4.500h7M0 7.500h7M0 10.500h7" fill="none" stroke="#34485c" stroke-width="1.500"/></svg></button>
  </aside>

  <section class="floating">
    <h2>实体</h2>
    <div class="solids">
      <button class="ic" aria-label="长方体"><svg><use href="#sbox"/></svg></button>
      <button class="ic" aria-label="球体"><svg><use href="#sball"/></svg></button>
      <button class="ic" aria-label="圆柱体"><svg><use href="#scyl"/></svg></button>
      <button class="ic" aria-label="圆锥体"><svg><use href="#scone"/></svg></button>
      <button class="ic" aria-label="楔体"><svg><use href="#swedge"/></svg></button>
      <button class="ic" aria-label="圆环"><svg><use href="#storus"/></svg></button>
      <i class="sep"></i>
      <button class="ic" aria-label="拉伸"><svg><use href="#extrude"/></svg></button>
      <button class="ic" aria-label="旋转"><svg><use href="#revolve"/></svg></button>
      <i class="sep"></i>
      <button class="ic" aria-label="剖切"><svg><use href="#slice"/></svg></button>
      <button class="ic" aria-label="切割"><svg><use href="#section"/></svg></button>
      <button class="ic" aria-label="干涉"><svg><use href="#interfere"/></svg></button>
    </div>
  </section>
</main>

<div class="tabrow">
  <button class="nav edge" aria-label="第一个"><svg viewBox="0 0 10 10"><path d="M6 1v8L1 5z"/></svg></button>
  <button class="nav" aria-label="上一个"><svg viewBox="0 0 10 10"><path d="M7 1v8L2 5z"/></svg></button>
  <button class="nav" aria-label="下一个"><svg viewBox="0 0 10 10"><path d="M3 1v8l5-4z"/></svg></button>
  <button class="nav" aria-label="最后一个"><svg viewBox="0 0 10 10"><path d="M1 1v8l5-4zM8 1h1v8H8z"/></svg></button>
  <div class="tabs">
    <button class="tab active"><svg viewBox="0 0 40 15" preserveAspectRatio="none"><path d="M0 0L5 14H35L40 0"/></svg><span>模型</span></button>
    <button class="tab"><svg viewBox="0 0 44 15" preserveAspectRatio="none"><path d="M0 0L5 14H38L43 0"/></svg><span>布局1</span></button>
    <button class="tab"><svg viewBox="0 0 44 15" preserveAspectRatio="none"><path d="M0 0L5 14H38L43 0"/></svg><span>布局2</span></button>
  </div>
  <div class="scroll">
    <i class="grip"></i>
    <button class="nav plain" aria-label="向左滚动"><svg viewBox="0 0 10 10"><path d="M7 1v8L2 5z"/></svg></button>
    <i class="thumb"></i>
  </div>
</div>

<footer class="command">
  <div class="log">
    <p><span class="han">命 令</span>:</p>
    <p><span class="han">命 令</span>: _qsave</p>
  </div>
  <div class="prompt"><label for="cmd"><span class="han">命 令</span>:</label><input id="cmd" type="text"></div>
</footer>
</body>
</html>
```

FILE: styles.css
```css
* { box-sizing: border-box; }
body {
  margin: 0;
  height: 100vh;
  display: flex;
  flex-direction: column;
  overflow: hidden;
  background: #f3f3f3;
  color: #111;
  font: 10px/20px "Liberation Mono", "Noto Sans CJK SC", monospace;
}
button {
  border: 0;
  padding: 0;
  background: none;
  color: inherit;
  font: inherit;
}
.sprite { position: absolute; width: 0; height: 0; }
.zh { font-family: "Noto Sans CJK SC", sans-serif; font-size: 12px; }

.titlebar {
  position: relative;
  display: flex;
  align-items: center;
  gap: 4px;
  flex: none;
  height: 24px;
  border-bottom: 1px solid #687c8d;
  background: linear-gradient(100deg, #d8e5ee 0%, #b8cbdc 30%, #bfd2e4 58%, #cddbe8 68%, #bdd0e2 78%, #ccdbe9 100%);
}
.title { margin: 0; font-size: 10px; font-weight: 400; line-height: 22px; color: #22303c; white-space: nowrap; }
.app-logo { flex: none; width: 16px; height: 16px; margin-left: -8px; }
.dock {
  position: absolute;
  top: 0;
  right: 49px;
  width: 350px;
  height: 3px;
  border-bottom: 1px solid #187ba5;
  border-radius: 0 0 4px 4px;
  background: #43c4ed;
}

.menubar {
  display: flex;
  align-items: center;
  gap: 12px;
  flex: none;
  height: 20px;
  color: #8c8c8c;
  white-space: nowrap;
}
.menubar .app-logo { margin: 0 -8px 0 -4px; }

.toolrow { display: flex; flex: none; height: 27px; overflow: hidden; }
.toolrow.second { height: 29px; padding-bottom: 1px; }
.toolbar {
  display: flex;
  align-items: center;
  flex: none;
  padding: 3px 4px 0 12px;
  border-right: 1px solid #9b9b9b;
  border-bottom: 1px solid #a8a0a0;
}
.toolbar.first { padding-left: 4px; padding-right: 3px; }
.toolbar.wide { padding-left: 15px; }
.toolbar.last { flex: 1; border-right: 0; padding-right: 0; }
.ic {
  display: flex;
  align-items: center;
  justify-content: center;
  flex: none;
  width: 23px;
  height: 22px;
}
.ic svg { width: 16px; height: 16px; }
.sep { flex: none; width: 1px; height: 17px; margin: 0 2px 0 3px; background: #777; }
.drop { position: relative; width: 13px; height: 20px; }
.drop::after, .combo::after {
  content: "";
  position: absolute;
  top: 50%;
  right: 4px;
  margin-top: -1px;
  border: 4px solid transparent;
  border-top-color: #08083c;
  border-bottom: 0;
  pointer-events: none;
}
.drop::after { border-width: 3px; border-bottom: 0; }
.drop.off::after, .combo.off::after { border-top-color: #bbb; }
.combo.noarrow::after { display: none; }

.combo { position: relative; flex: none; height: 22px; }
.combo select {
  width: 100%;
  height: 100%;
  padding: 0 0 0 7px;
  border: 1px solid #7d8488;
  border-radius: 0;
  appearance: none;
  background: #fff;
  color: #000;
  font-size: 12px;
  font-family: "Liberation Serif", serif;
  opacity: 1;
}
.combo select.zh { font-family: "Noto Sans CJK SC", sans-serif; }
.combo.off select { background: #f3f3f3; color: #858585; border-color: #999; }
.combo select.layer { padding-left: 85px; }
.combo select.color { padding-left: 19px; }
.combo select.ltype { padding-left: 68px; }
.combo select.lweight { padding-left: 43px; }
.w300 { width: 300px; }
.w174 { width: 174px; }
.w160 { width: 160px; }
.w150 { width: 150px; }
.w140 { width: 140px; }
.w125 { width: 125px; }
.w120 { width: 120px; }
.grow { flex: 1; margin-right: -4px; }
.marks {
  position: absolute;
  top: 0;
  left: 4px;
  display: flex;
  align-items: center;
  height: 100%;
  pointer-events: none;
}
.marks svg { width: 16px; height: 16px; }
.marks .swatch { width: 11px; height: 11px; margin: 0 2px; border: 1px solid #111; background: #fff; }
.line { width: 35px; height: 1px; background: #000; }
.line.long { width: 60px; }

.canvas {
  position: relative;
  flex: 1;
  min-height: 0;
  overflow: hidden;
  border-top: 2px solid #666;
  background: #000;
}
.drawing { display: block; width: 100%; height: 100%; }
.ink { fill: none; stroke: #fff; stroke-width: 1; shape-rendering: crispEdges; }
.dim path { marker-start: url(#arrow); marker-end: url(#arrow); }
.reddim { stroke: #f00; marker-start: url(#arrowred); marker-end: url(#arrowred); }
.dimtext { fill: #fff; font-family: "DejaVu Sans", sans-serif; font-size: 25px; font-weight: 200; text-anchor: middle; }
.dimtext .red { fill: #f00; }
.result { fill: #fff; font-family: "Liberation Serif", "Noto Sans CJK SC", serif; font-size: 47px; }
.result .han { font-family: "Noto Sans CJK SC", sans-serif; font-weight: 300; }
.result .eq { font-family: "DejaVu Sans", sans-serif; font-size: 30px; font-weight: 200; }

.palette {
  position: absolute;
  top: 0;
  left: 0;
  display: flex;
  flex-direction: column;
  gap: 8px;
  width: 16px;
  height: 687px;
  max-height: 100%;
  padding: 4px 0;
  border-right: 2px solid #8f8f8f;
  border-bottom: 2px solid #8f8f8f;
  background: linear-gradient(90deg, #b8c9da 0 11px, #d9dde0 12px);
}
.mini { display: block; width: 10px; height: 14px; }
.mini svg { display: block; width: 10px; height: 14px; }
.side {
  width: 12px;
  margin: auto 0 4px -4px;
  writing-mode: vertical-rl;
  text-orientation: sideways;
  transform: rotate(180deg);
  color: #34485c;
  font: 12px/12px "Noto Sans CJK SC", sans-serif;
}

.floating {
  position: absolute;
  top: 4px;
  right: 0;
  width: 259px;
  height: 55px;
  overflow: hidden;
  border: 2px solid #f4f4f4;
  border-right: 0;
  border-bottom-color: #999;
  background: #f3f3f3;
}
.floating h2 {
  margin: 0;
  height: 22px;
  padding-left: 3px;
  background: #bccad9;
  color: #3c4a57;
  font: 12px/16px "Noto Sans CJK SC", sans-serif;
}
.solids { display: flex; align-items: center; height: 29px; padding-left: 2px; }

.tabrow { display: flex; flex: none; height: 16px; background: #f3f3f3; }
.nav {
  display: flex;
  align-items: center;
  justify-content: center;
  width: 18px;
  height: 15px;
  border-right: 1px solid #aaa;
  border-bottom: 1px solid #aaa;
}
.nav svg { width: 10px; height: 10px; }
.nav.edge { width: 11px; }
.nav.plain { border: 0; }
.tabs { display: flex; margin-left: 3px; }
.tab { position: relative; width: 42px; height: 15px; font: 12px/12px "Noto Sans CJK SC", sans-serif; }
.tab svg { position: absolute; inset: 0; width: 44px; height: 15px; }
.tab path { fill: #fff; stroke: #111; }
.tab span { position: relative; }
.tab.active { width: 38px; color: #1fa79f; }
.tab.active svg { width: 40px; }
.tab.active path { fill: #000; }
.scroll { display: flex; flex: 0 1 441px; margin-left: auto; background: linear-gradient(#d6d6d6, #e6e6e6 6px); }
.grip { width: 5px; height: 13px; border: 1px solid #aaa; background: #fff; }
.thumb { width: 15px; height: 13px; margin: 1px 0 0 14px; border: 1px solid #888; border-radius: 1px; background: linear-gradient(#f5f5f5, #c6c6c6); }

.command {
  flex: none;
  display: flex;
  flex-direction: column;
  height: 53px;
  margin-top: 5px;
  padding: 4px 0 0 8px;
  border-top: 2px solid #222;
  background: #f0f0f0;
  font-size: 13px;
  line-height: 13px;
}
.log { flex: none; height: 33px; border: 1px solid #222; border-width: 2px 0 0 1px; border-bottom: 1px solid #999; padding-left: 1px; background: #fff; }
.log p { margin: 0; height: 13px; white-space: pre; }
.command .han { display: inline-block; width: 32px; font: 12px/13px "Noto Sans CJK SC", sans-serif; vertical-align: top; }
.prompt { display: flex; flex: 1; align-items: flex-start; padding: 1px 0 0 1px; border-left: 1px solid #222; background: #fff; }
.prompt input { flex: 1; height: 13px; padding: 0 4px; border: 0; outline: 0; font: inherit; }
```
